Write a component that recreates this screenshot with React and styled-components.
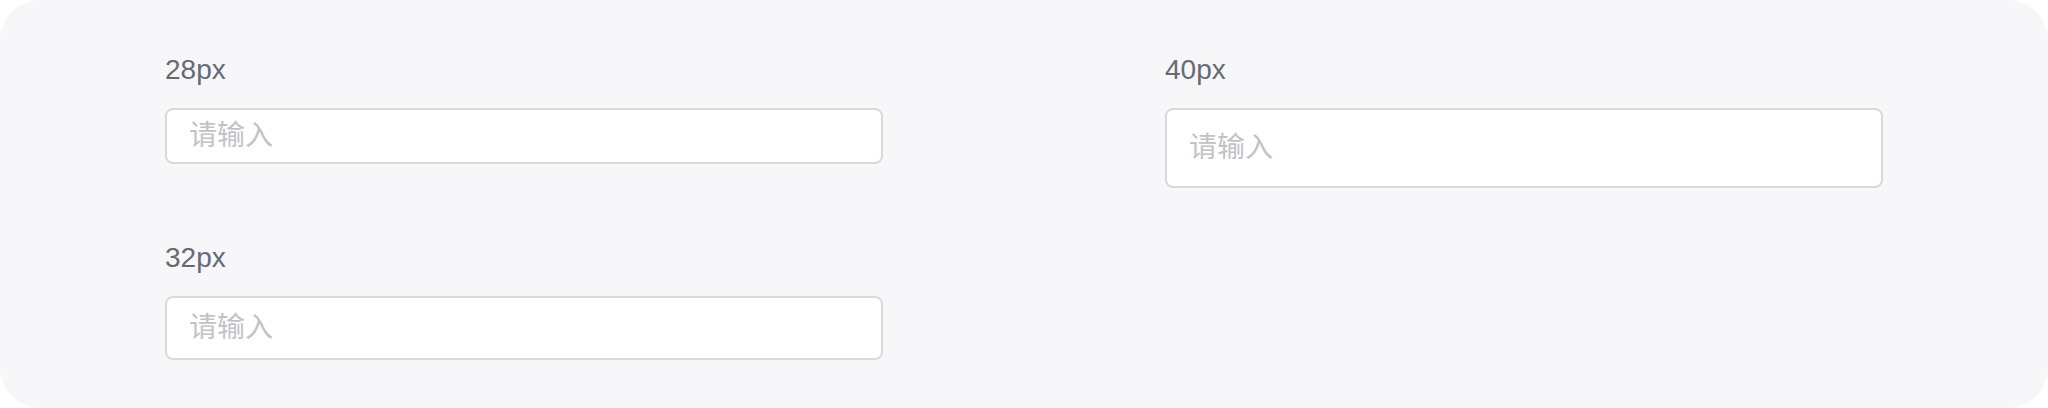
import React from "react";
import styled, { createGlobalStyle } from "styled-components";

const Global = createGlobalStyle`
  html, body { margin: 0; padding: 0; background: #ffffff; }
  body { font-family: "Liberation Sans", "Noto Sans CJK SC", sans-serif; }
  * { box-sizing: border-box; }
`;

const Panel = styled.div`
  width: 2048px;
  height: 408px;
  background: #f7f7f9;
  border-radius: 40px;
  padding: 48px 165px;
  display: grid;
  grid-template-columns: 718px 718px;
  column-gap: 282px;
  row-gap: 48px;
  align-items: start;
  overflow: hidden;
`;

const Field = styled.div`
  display: flex;
  flex-direction: column;
  gap: 16px;
`;

const Label = styled.div`
  font-size: 28px;
  line-height: 44px;
  color: #666a76;
  font-family: "Liberation Sans", "Noto Sans CJK SC", sans-serif;
`;

const Input = styled.input`
  display: block;
  width: 100%;
  height: ${(p) => p.$h * 2}px;
  border: 2px solid #d9d9dc;
  border-radius: 8px;
  background: #ffffff;
  padding: 0 22px;
  font-size: 28px;
  font-family: "Liberation Sans", "Noto Sans CJK SC", sans-serif;
  color: #333;
  outline: none;
  &::placeholder { color: #c2c2c7; }
`;

const sizes = [28, 40, 32];

export default function App() {
  return (
    <>
      <Global />
      <Panel>
        {sizes.map((s) => (
          <Field key={s}>
            <Label>{s}px</Label>
            <Input $h={s} placeholder="请输入" />
          </Field>
        ))}
      </Panel>
    </>
  );
}
